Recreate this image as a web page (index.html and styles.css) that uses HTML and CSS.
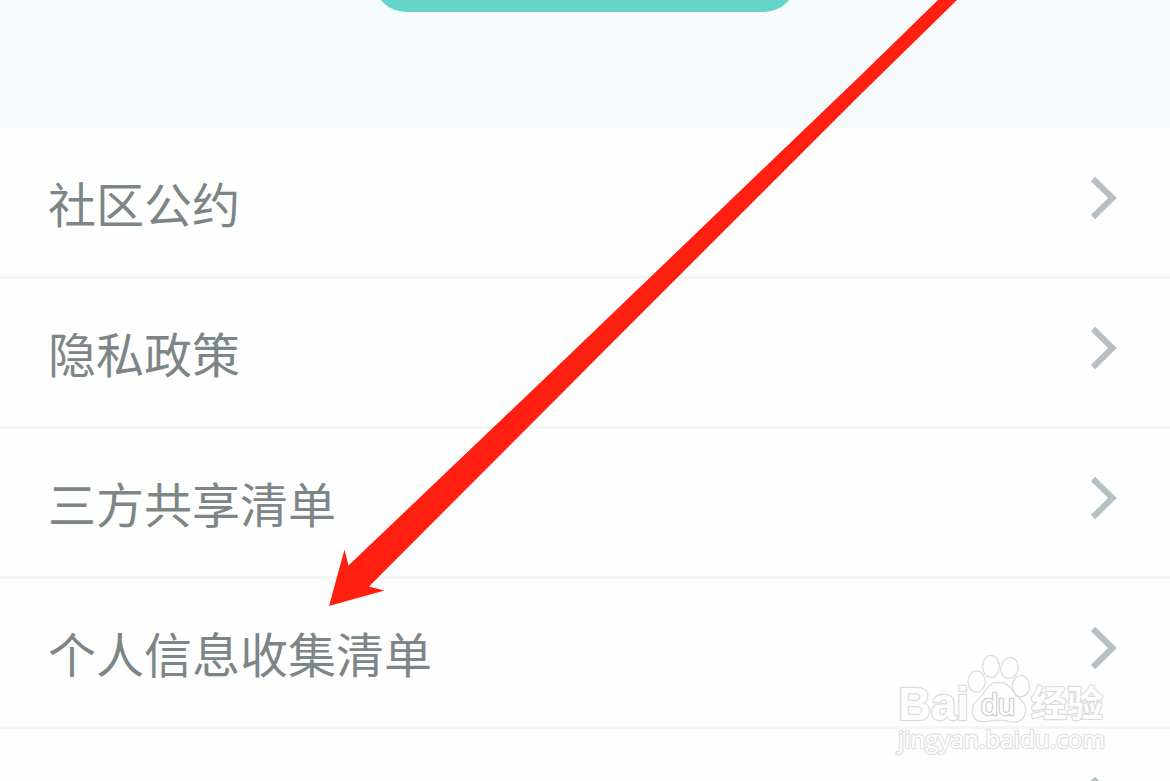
FILE: index.html
```
<!DOCTYPE html>
<html lang="zh-CN">
<head>
    <meta charset="UTF-8">
    <title>隐私政策</title>
    <link rel="stylesheet" href="styles.css">
</head>
<body>
    <div class="header">
        <div class="action-btn"></div>
    </div>

    <div class="list">
        <div class="list-item">
            <span class="label">社区公约</span>
            <svg class="chevron" width="28" height="44" viewBox="0 0 28 44"><path d="M3 3L22.500 22L3 41"/></svg>
        </div>
        <div class="list-item">
            <span class="label">隐私政策</span>
            <svg class="chevron" width="28" height="44" viewBox="0 0 28 44"><path d="M3 3L22.500 22L3 41"/></svg>
        </div>
        <div class="list-item">
            <span class="label">三方共享清单</span>
            <svg class="chevron" width="28" height="44" viewBox="0 0 28 44"><path d="M3 3L22.500 22L3 41"/></svg>
        </div>
        <div class="list-item">
            <span class="label">个人信息收集清单</span>
            <svg class="chevron" width="28" height="44" viewBox="0 0 28 44"><path d="M3 3L22.500 22L3 41"/></svg>
        </div>
        <div class="list-item">
            <span class="label"></span>
            <svg class="chevron" width="28" height="44" viewBox="0 0 28 44"><path d="M3 3L22.500 22L3 41"/></svg>
        </div>
    </div>

    <svg class="arrow" width="1170" height="781" viewBox="0 0 1170 781">
        <path d="M329 606L344.500 549.500L348.500 565.500L564 360L860 76L938 0H957L860 95L595 360L369 586.500L384.500 590.500Z"/>
    </svg>

    <svg class="watermark" width="290" height="141" viewBox="0 0 290 141">
        <g class="wm-logo">
            <text class="wm-bai" x="18" y="79.500" textLength="71" lengthAdjust="spacingAndGlyphs">Bai</text>
            <ellipse cx="96.500" cy="41.500" rx="8" ry="10"/>
            <ellipse cx="111" cy="26.500" rx="7.700" ry="10.500"/>
            <ellipse cx="129.500" cy="28" rx="8" ry="10" transform="rotate(12 129.500 28)"/>
            <ellipse cx="141" cy="46" rx="8" ry="10"/>
            <path d="M119 43C110 43 107 49 103 55C98 61 93 63 93 71C93 79 99 82 106 81C115 79 122 79 130 81C138 83 145 79 145 70C145 62 139 60 134 54C130 48 127 43 119 43Z"/>
            <text class="wm-du" x="101" y="75" textLength="34" lengthAdjust="spacingAndGlyphs">du</text>
            <text class="wm-cn" x="151" y="77" textLength="72" lengthAdjust="spacingAndGlyphs">经验</text>
        </g>
        <text class="wm-url" x="18" y="108" textLength="207" lengthAdjust="spacingAndGlyphs">jingyan.baidu.com</text>
    </svg>
</body>
</html>
```
FILE: styles.css
```
:root {
    --primary-color: #63d4c7;
    --background-color: #f6fafb;
    --border-color: #f5f5f5;
    --text-color: #7d8686;
    --chevron-color: #b5c0c4;
    --arrow-color: #ff2012;
}

* {
    box-sizing: border-box;
    margin: 0;
    padding: 0;
}

body {
    position: relative;
    width: 1170px;
    height: 781px;
    overflow: hidden;
    background: #fefefe;
    color: var(--text-color);
    font-family: "Noto Sans CJK SC", sans-serif;
}

.header {
    display: flex;
    justify-content: center;
    height: 128px;
    background: var(--background-color);
}

.action-btn {
    width: 422px;
    height: 96px;
    margin-top: -84px;
    border-radius: 32px;
    background: var(--primary-color);
}

.list {
    height: 653px;
    overflow: hidden;
}

.list-item {
    display: flex;
    align-items: flex-start;
    justify-content: space-between;
    height: 150px;
    padding: 47px 52px 0 48px;
    border-bottom: 3px solid var(--border-color);
}

.list-item:first-child {
    height: 151px;
    padding-top: 48px;
}

.list-item:last-child {
    height: 52px;
    border-bottom: none;
}

.label {
    height: 54px;
    margin-top: -1px;
    font-size: 48px;
    line-height: 54px;
}

.chevron {
    flex-shrink: 0;
    fill: none;
    stroke: var(--chevron-color);
    stroke-width: 6;
}

.arrow {
    position: absolute;
    top: 0;
    left: 0;
    fill: var(--arrow-color);
}

.watermark {
    position: absolute;
    right: 0;
    bottom: 0;
    fill: #fefefe;
    stroke: #dcdcdc;
    stroke-width: 2.5;
    stroke-linejoin: round;
    paint-order: stroke;
}

.wm-bai {
    font-family: "Liberation Sans", Arial, sans-serif;
    font-size: 46px;
    font-weight: bold;
}

.wm-du {
    font-family: "Liberation Sans", Arial, sans-serif;
    font-size: 30px;
    stroke: #cfcfcf;
}

.wm-cn {
    font-family: "Noto Sans CJK SC", sans-serif;
    font-size: 36px;
    font-weight: bold;
}

.wm-url {
    font-family: "Open Sans", "Noto Sans", sans-serif;
    font-size: 23px;
    stroke: #e2e2e2;
}
```
